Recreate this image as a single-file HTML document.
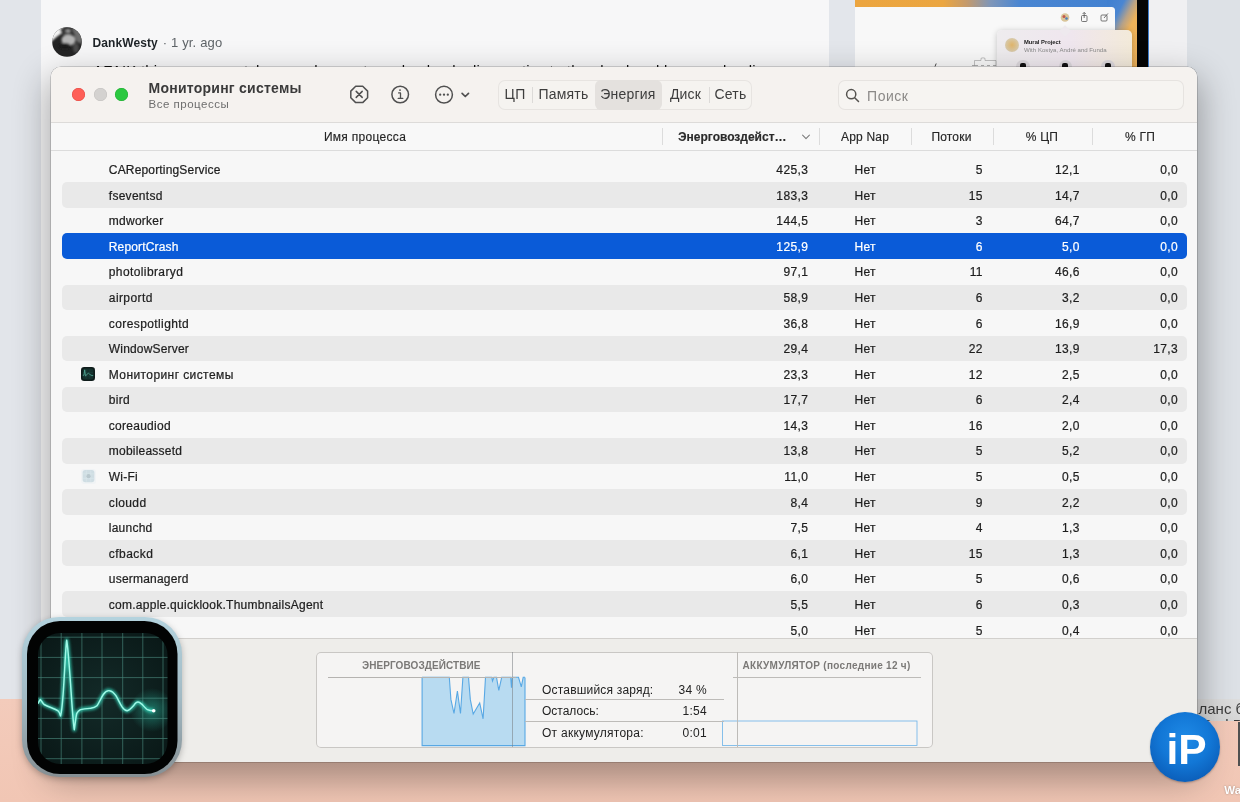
<!DOCTYPE html>
<html lang="ru">
<head>
<meta charset="utf-8">
<title>Мониторинг системы</title>
<style>
html,body{margin:0;padding:0}
body{width:1240px;height:802px;overflow:hidden;position:relative;will-change:transform;background:#f7f7f8;font-family:"Liberation Sans",sans-serif;color:#222}
.abs{position:absolute}
/* ---------- background page ---------- */
#lm{left:0;top:0;width:41px;height:699px;background:#e2e5ea}
#rm{left:1187px;top:0;width:53px;height:699px;background:#dde1e6}
#pink{left:0;top:699px;width:1240px;height:103px;background:linear-gradient(#f3cbbb,#f1c6b4)}
#avatar{left:52px;top:26px;width:30px;height:30px;border-radius:50%;background:radial-gradient(circle at 55% 40%,#bdbdbd 0,#8a8a8a 22%,#3a3a3a 55%,#1d1d1d 100%)}
#uname{left:92.5px;top:35px;font-size:12px;font-weight:700;color:#1f2428;white-space:nowrap;line-height:15px;letter-spacing:.1px}
#uname span{font-weight:400;font-size:13px;color:#5f6468;letter-spacing:.15px;margin-left:1.5px}
#cmt{left:93px;top:61.7px;font-size:15px;color:#111;white-space:nowrap;line-height:18px;letter-spacing:.2px}
#imgwrap{left:829px;top:0;width:358px;height:70px;background:#e3e6eb;overflow:hidden}
#img{left:26px;top:0;width:294px;height:70px;background:linear-gradient(90deg,#eca53f 0%,#eba641 30%,#c49a6c 38%,#7f96b8 46%,#4a86d2 56%,#3f7fd0 100%)}
/* ---------- window ---------- */
#shadow{left:51px;top:67.4px;width:1145.8px;height:695.1px;border-radius:10px;box-shadow:0 14px 34px 4px rgba(0,0,0,.31),0 0 0 .5px rgba(0,0,0,.3)}
#win{left:51px;top:67.4px;width:1145.8px;height:695.1px;border-radius:10px;overflow:hidden;background:#f7f7f7}
#tb{left:0;top:0;width:100%;height:56px;background:#f5f2ef;border-bottom:1px solid #dddbd9;box-sizing:border-box}
.tl{width:13px;height:13px;border-radius:50%;top:21.7px}
#title{left:97.5px;top:13px;font-size:14px;font-weight:700;color:#3a3a3a;letter-spacing:.25px;white-space:nowrap;line-height:17px}
#subtitle{left:97.5px;top:30.5px;font-size:11.5px;color:#6e6e6e;letter-spacing:.5px;white-space:nowrap;line-height:14px}
#tabs{left:446.5px;top:13.6px;width:254px;height:30px;border-radius:7px;background:#f5f3f0;box-shadow:inset 0 0 0 1px #e7e4e1}
#tabs .t{position:absolute;top:0;height:30px;line-height:29.6px;font-size:14px;color:#3d3d3d;text-align:center;letter-spacing:.2px;white-space:nowrap}
#tabsel{left:97px;top:0;width:67.5px;height:30px;border-radius:6px;background:#e4e1de}
.sep{width:1px;background:#dcdad8;top:6.5px;height:16.5px}
#search{left:786.8px;top:13.6px;width:346px;height:30px;border-radius:7px;background:#f6f4f1;box-shadow:inset 0 0 0 1px #e6e3e0}
#search span{position:absolute;left:29.3px;top:2.2px;line-height:29.4px;font-size:14px;letter-spacing:.5px;color:#8b8987}
#hdr{left:0;top:56px;width:100%;height:28.4px;background:#f8f8f8;border-bottom:1px solid #dcdcdc;box-sizing:border-box}
#hdr .h{position:absolute;top:1.5px;line-height:27px;font-size:12px;color:#262626;-webkit-text-stroke:.15px currentColor;white-space:nowrap;text-align:center}
#hdr .vs{position:absolute;top:5px;width:1px;height:17px;background:#dcdcdc}
#table{left:0;top:83.5px;width:100%;height:487.5px;background:#fafafa;overflow:hidden}
.row{position:absolute;left:10.5px;width:1125px;height:25.58px;line-height:25.6px;font-size:12px;color:#1e1e1e;border-radius:5px;white-space:nowrap}
.row.alt{background:#e9e9e9}
.row.sel{background:#0a5bd8;color:#fff}
.row span{position:absolute;top:1.5px;-webkit-text-stroke:.22px currentColor}
.c-name{left:47.3px;letter-spacing:.2px}
.c-en{right:378.5px;letter-spacing:.4px;margin-right:-.4px}
.c-nap{left:793px;letter-spacing:.3px}
.c-th{right:204px;letter-spacing:.4px;margin-right:-.4px}
.c-cpu{right:107px;letter-spacing:.4px;margin-right:-.4px}
.c-gpu{right:8.8px;letter-spacing:.4px;margin-right:-.4px}
.ric{position:absolute;left:19.5px;top:5.8px;width:14px;height:14px}
#pane{left:0;top:571px;width:100%;height:125px;background:#eeedea;border-top:1px solid #d2d0cd;box-sizing:border-box}
#box{left:265px;top:585.5px;width:617px;height:96px;border-radius:5px;background:#f5f4f3;box-shadow:inset 0 0 0 1px #c9c7c4}
.bl{position:absolute;background:#bdbbb8}
.kv{position:absolute;font-size:12px;color:#222;white-space:nowrap;line-height:14px}
.ph{position:absolute;font-size:10px;font-weight:700;color:#7b7977;white-space:nowrap;line-height:12px}
/* ---------- big icon ---------- */
#am{left:22px;top:617px;width:160px;height:160px;filter:drop-shadow(0 2px 3px rgba(0,0,0,.25))}
#ip{left:1150px;top:712px;width:70px;height:70px;border-radius:50%;background:radial-gradient(circle at 50% 38%,#1f8ae6 0,#1277d6 45%,#0b5db8 80%,#084a98 100%);box-shadow:0 1px 2px rgba(0,0,0,.25)}
#ip span{position:absolute;left:16.5px;top:12.6px;font-size:42.5px;font-weight:700;color:#fff;line-height:49px;letter-spacing:0}
</style>
</head>
<body>
<!-- background web page -->
<div class="abs" id="lm"></div>
<div class="abs" id="rm"></div>
<svg class="abs" style="left:52.2px;top:26.8px" width="30" height="30" viewBox="0 0 30 30">
  <defs><clipPath id="avc"><circle cx="15" cy="15" r="14.8"/></clipPath><filter id="avb" x="-30%" y="-30%" width="160%" height="160%"><feGaussianBlur stdDeviation="1"/></filter></defs>
  <g clip-path="url(#avc)">
    <rect width="30" height="30" fill="#242424"/>
    <g filter="url(#avb)">
      <path d="M-3 -3H11L9.500 6.500Q5 9 -2 16Z" fill="#f4f4f4"/>
      <path d="M8 1h12l1 5-6 3-6-3z" fill="#3a3a3a"/>
      <ellipse cx="16.5" cy="13" rx="7" ry="5.5" fill="#b4b4b4"/>
      <path d="M20 1h10v16l-5-2-3-8z" fill="#6d6d6d"/>
      <ellipse cx="13" cy="19" rx="6" ry="3" fill="#1a1a1a"/>
      <ellipse cx="24" cy="21" rx="3" ry="5" fill="#4a4a4a"/>
      <rect x="14" y="2.5" width="4" height="3" fill="#9a9a9a"/>
    </g>
  </g>
</svg>
<div class="abs" id="uname">DankWesty <span>· 1 yr. ago</span></div>
<div class="abs" id="cmt">AFAIK this process catches crash reports and uploads diagnostics to the cloud and keeps reloading</div>
<div class="abs" id="imgwrap">
  <div class="abs" id="img">
    <div class="abs" style="left:252px;top:0;width:30px;height:70px;background:linear-gradient(118deg,#3f7fd0 0%,#4a86d2 26%,#b7a288 42%,#efb35a 56%,#eeb25c 100%)"></div>
    <div class="abs" style="left:0;top:7px;width:259.5px;height:70px;background:#f8f8f8;border-radius:0 3.5px 0 0"></div>
    <div class="abs" style="left:282px;top:0;width:10.8px;height:70px;background:#050505"></div>
    <svg class="abs" style="left:0;top:0" width="294" height="70" viewBox="0 0 294 70">
      <circle cx="210" cy="17.5" r="4.3" fill="#d9c59a"/><circle cx="209" cy="16.5" r="1.5" fill="#c2584a"/><circle cx="211.5" cy="18.5" r="1.3" fill="#4d7fb8"/>
      <g fill="none" stroke="#555" stroke-width=".8"><rect x="226.5" y="15.5" width="5.5" height="6" rx="1"/><path d="M229.2 18V12.6M227.6 14l1.6-1.6 1.6 1.6"/><rect x="246" y="15" width="6" height="6" rx="1"/><path d="M249 18l4-4.6"/></g>
      <path d="M80 66.5l1.2-3" stroke="#333" stroke-width=".9" fill="none"/>
      <path d="M119.5 66v-5.5h6.5v-2.2q2-1 4 0v2.200h11v5.500" stroke="#9a9a9a" stroke-width=".6" fill="none"/><path d="M117 65.500h6M126 65.500h3M132 65.500h3M138 65.500h3" stroke="#999" stroke-width=".8"/>
    </svg>
    <div class="abs" style="left:142px;top:30px;width:135px;height:50px;border-radius:5px;background:linear-gradient(90deg,#eeecee,#efe6ee 55%,#f3ead9);box-shadow:0 1px 6px rgba(0,0,0,.22)">
      <div class="abs" style="left:64px;top:-3.5px;width:8px;height:8px;transform:rotate(45deg);background:#eee9ee"></div>
      <div class="abs" style="left:8px;top:8px;width:14px;height:14px;border-radius:50%;background:radial-gradient(circle,#e0b56a 0,#d9c7a2 60%,#cfcfcf 100%)"></div>
      <div class="abs" style="left:27px;top:8.5px;font-size:5.8px;font-weight:700;color:#222;white-space:nowrap;line-height:7px">Mural Project</div>
      <div class="abs" style="left:27px;top:15.8px;font-size:6.1px;color:#8a8a8a;white-space:nowrap;line-height:7px">With Kostya, André and Funda</div>
      <div class="abs" style="left:19.3px;top:29.5px;width:13.5px;height:13.5px;border-radius:50%;background:#dcd8dc"><div class="abs" style="left:3.7px;top:3.2px;width:6px;height:6px;border-radius:2px;background:#111"></div></div>
      <div class="abs" style="left:61.8px;top:29.5px;width:13.5px;height:13.5px;border-radius:50%;background:#dcd8dc"><div class="abs" style="left:3.7px;top:3.2px;width:6px;height:6px;border-radius:2px;background:#111"></div></div>
      <div class="abs" style="left:104.3px;top:29.5px;width:13.5px;height:13.5px;border-radius:50%;background:#dcd8dc"><div class="abs" style="left:3.7px;top:3.2px;width:6px;height:6px;border-radius:2px;background:#111"></div></div>
    </div>
  </div>
  <div class="abs" style="left:320px;top:0;width:38px;height:70px;background:#f0f0f2"></div>
</div>
<div class="abs" id="pink"></div>
<div class="abs" style="left:1197px;top:699px;width:43px;height:22.4px;background:linear-gradient(#dddddd,#d6d6d6);overflow:hidden">
  <div class="abs" style="left:1.5px;top:-.5px;font-size:15px;color:#3c3c3c;white-space:nowrap;line-height:20px">ланс б</div>
  <div class="abs" style="left:1.5px;top:16px;font-size:15px;color:#3c3c3c;white-space:nowrap;line-height:20px">iPad Pro</div>
</div>
<div class="abs" style="left:1238px;top:721.5px;width:2px;height:44px;background:#505050"></div>
<div class="abs" style="left:1224.3px;top:783.3px;font-size:11.5px;font-weight:700;color:#fff;white-space:nowrap;line-height:14px;text-shadow:0 0 2px rgba(0,0,0,.35)">Wallpaper</div>

<!-- Activity Monitor window -->
<div class="abs" id="shadow"></div>
<div class="abs" id="win">
<div class="abs" id="wi" style="left:0;top:-.9px;width:100%;height:696px">
  <div class="abs" id="tb">
    <div class="abs tl" style="left:21px;background:#fe5f57;box-shadow:inset 0 0 0 .5px #e2463f"></div>
    <div class="abs tl" style="left:42.5px;background:#d4d2d0;box-shadow:inset 0 0 0 .5px #c2c0be"></div>
    <div class="abs tl" style="left:64px;background:#2bc840;box-shadow:inset 0 0 0 .5px #1eab30"></div>
    <div class="abs" id="title">Мониторинг системы</div>
    <div class="abs" id="subtitle">Все процессы</div>
    <svg class="abs" style="left:290px;top:9.4px" width="140" height="36" viewBox="0 0 140 36" fill="none" stroke="#505050" stroke-width="1.5" stroke-linecap="round" stroke-linejoin="round">
      <path d="M14.7 10.2h7l4.9 4.9v6.600l-4.900 4.900h-7l-4.900-4.900v-6.600z"/>
      <path d="M15.200 15.400l6 6M21.200 15.400l-6 6"/>
      <circle cx="59.2" cy="18.500" r="8.300"/>
      <path d="M57.600 16.900h1.900v5.400M57.200 22.400h4.600" stroke-width="1.300"/>
      <circle cx="59" cy="14.100" r=".95" fill="#505050" stroke="none"/>
      <circle cx="103" cy="18.700" r="8.400"/>
      <g fill="#505050" stroke="none"><circle cx="99.200" cy="18.700" r="1.150"/><circle cx="103" cy="18.700" r="1.150"/><circle cx="106.800" cy="18.700" r="1.150"/></g>
      <path d="M121.100 17.300l3.200 3.200 3.200-3.200" stroke-width="1.700"/>
    </svg>
    <div class="abs" id="tabs">
      <div class="abs" id="tabsel"></div>
      <div class="abs sep" style="left:34.5px"></div>
      <div class="abs sep" style="left:211.5px"></div>
      <div class="t" style="left:0;width:35px">ЦП</div>
      <div class="t" style="left:35px;width:62px">Память</div>
      <div class="t" style="left:97px;width:67px">Энергия</div>
      <div class="t" style="left:164px;width:48px">Диск</div>
      <div class="t" style="left:212px;width:42px">Сеть</div>
    </div>
    <div class="abs" id="search">
      <svg class="abs" style="left:7.4px;top:7.7px" width="16" height="16" viewBox="0 0 16 16" fill="none" stroke="#55534f" stroke-width="1.5" stroke-linecap="round"><circle cx="6.2" cy="6.2" r="4.6"/><path d="M9.7 9.7l3.8 3.8"/></svg>
      <span>Поиск</span>
    </div>
  </div>
  <div class="abs" id="hdr">
    <div class="h" style="left:14px;width:600px;letter-spacing:.3px">Имя процесса</div>
    <div class="vs" style="left:610.5px"></div>
    <div class="h" style="left:627px;font-weight:700;text-align:left;color:#2a2a2a">Энерговоздейст…</div>
    <svg class="abs" style="left:750px;top:10.5px" width="10" height="8" viewBox="0 0 10 8" fill="none" stroke="#7c7c7c" stroke-width="1.1" stroke-linecap="round" stroke-linejoin="round"><path d="M1.6 2.2l3.4 3.4 3.4-3.4"/></svg>
    <div class="vs" style="left:767.5px"></div>
    <div class="h" style="left:768px;width:92px;letter-spacing:.2px">App Nap</div>
    <div class="vs" style="left:860px"></div>
    <div class="h" style="left:860px;width:81px;letter-spacing:.2px">Потоки</div>
    <div class="vs" style="left:941.5px"></div>
    <div class="h" style="left:941px;width:100px;letter-spacing:.2px">% ЦП</div>
    <div class="vs" style="left:1041px"></div>
    <div class="h" style="left:1041px;width:96px;letter-spacing:.2px">% ГП</div>
  </div>
  <div class="abs" id="table" style="top:0;height:571px;background:none">
<div class="row" style="top:90.10px"><span class="c-name" style="letter-spacing:0.17px">CAReportingService</span><span class="c-en">425,3</span><span class="c-nap">Нет</span><span class="c-th">5</span><span class="c-cpu">12,1</span><span class="c-gpu">0,0</span></div>
<div class="row alt" style="top:115.68px"><span class="c-name" style="letter-spacing:0.27px">fseventsd</span><span class="c-en">183,3</span><span class="c-nap">Нет</span><span class="c-th">15</span><span class="c-cpu">14,7</span><span class="c-gpu">0,0</span></div>
<div class="row" style="top:141.26px"><span class="c-name" style="letter-spacing:0.26px">mdworker</span><span class="c-en">144,5</span><span class="c-nap">Нет</span><span class="c-th">3</span><span class="c-cpu">64,7</span><span class="c-gpu">0,0</span></div>
<div class="row alt sel" style="top:166.84px"><span class="c-name" style="letter-spacing:0.15px">ReportCrash</span><span class="c-en">125,9</span><span class="c-nap">Нет</span><span class="c-th">6</span><span class="c-cpu">5,0</span><span class="c-gpu">0,0</span></div>
<div class="row" style="top:192.42px"><span class="c-name" style="letter-spacing:0.39px">photolibraryd</span><span class="c-en">97,1</span><span class="c-nap">Нет</span><span class="c-th">11</span><span class="c-cpu">46,6</span><span class="c-gpu">0,0</span></div>
<div class="row alt" style="top:218.00px"><span class="c-name" style="letter-spacing:0.41px">airportd</span><span class="c-en">58,9</span><span class="c-nap">Нет</span><span class="c-th">6</span><span class="c-cpu">3,2</span><span class="c-gpu">0,0</span></div>
<div class="row" style="top:243.58px"><span class="c-name" style="letter-spacing:0.4px">corespotlightd</span><span class="c-en">36,8</span><span class="c-nap">Нет</span><span class="c-th">6</span><span class="c-cpu">16,9</span><span class="c-gpu">0,0</span></div>
<div class="row alt" style="top:269.16px"><span class="c-name" style="letter-spacing:0.18px">WindowServer</span><span class="c-en">29,4</span><span class="c-nap">Нет</span><span class="c-th">22</span><span class="c-cpu">13,9</span><span class="c-gpu">17,3</span></div>
<div class="row" style="top:294.74px"><svg class="ric" viewBox="0 0 14 14"><rect x="0" y="0" width="14" height="14" rx="3.2" fill="#0f1c1b"/><rect x="1.6" y="1.6" width="10.8" height="10.8" rx="2" fill="#14302c"/><path d="M5.2 2.4v9.4M8.8 2.4v9.4M2 5.4h10M2 9h10" stroke="#1d4540" stroke-width=".5"/><polyline points="1.8,8.3 3,8.2 3.7,2.8 4.5,8.9 5.3,8.4 6.5,6.7 7.6,6.3 8.8,7.4 10,8.1 11,8.6 12.2,8.4" fill="none" stroke="#56b09d" stroke-width=".85" opacity=".9"/></svg><span class="c-name" style="letter-spacing:0.41px">Мониторинг системы</span><span class="c-en">23,3</span><span class="c-nap">Нет</span><span class="c-th">12</span><span class="c-cpu">2,5</span><span class="c-gpu">0,0</span></div>
<div class="row alt" style="top:320.32px"><span class="c-name" style="letter-spacing:0.25px">bird</span><span class="c-en">17,7</span><span class="c-nap">Нет</span><span class="c-th">6</span><span class="c-cpu">2,4</span><span class="c-gpu">0,0</span></div>
<div class="row" style="top:345.90px"><span class="c-name" style="letter-spacing:0.27px">coreaudiod</span><span class="c-en">14,3</span><span class="c-nap">Нет</span><span class="c-th">16</span><span class="c-cpu">2,0</span><span class="c-gpu">0,0</span></div>
<div class="row alt" style="top:371.48px"><span class="c-name" style="letter-spacing:0.22px">mobileassetd</span><span class="c-en">13,8</span><span class="c-nap">Нет</span><span class="c-th">5</span><span class="c-cpu">5,2</span><span class="c-gpu">0,0</span></div>
<div class="row" style="top:397.06px"><svg class="ric" style="left:19.2px;top:5.3px;width:15.1px;height:15.1px" viewBox="0 0 15 15"><rect x="0" y="0" width="15" height="15" rx="3.2" fill="#f0f3f5"/><rect x="1.6" y="1.1" width="11.7" height="12" rx="2.6" fill="#cfdde3"/><path d="M5.3 1.5v11.2M9.7 1.5v11.2M2 4.9h11M2 9.3h11" stroke="#d9e5ea" stroke-width=".7"/><circle cx="7.5" cy="7.1" r="2.1" fill="#b9c8ce"/></svg><span class="c-name" style="letter-spacing:0.25px">Wi-Fi</span><span class="c-en">11,0</span><span class="c-nap">Нет</span><span class="c-th">5</span><span class="c-cpu">0,5</span><span class="c-gpu">0,0</span></div>
<div class="row alt" style="top:422.64px"><span class="c-name" style="letter-spacing:0.39px">cloudd</span><span class="c-en">8,4</span><span class="c-nap">Нет</span><span class="c-th">9</span><span class="c-cpu">2,2</span><span class="c-gpu">0,0</span></div>
<div class="row" style="top:448.22px"><span class="c-name" style="letter-spacing:0.24px">launchd</span><span class="c-en">7,5</span><span class="c-nap">Нет</span><span class="c-th">4</span><span class="c-cpu">1,3</span><span class="c-gpu">0,0</span></div>
<div class="row alt" style="top:473.80px"><span class="c-name" style="letter-spacing:0.45px">cfbackd</span><span class="c-en">6,1</span><span class="c-nap">Нет</span><span class="c-th">15</span><span class="c-cpu">1,3</span><span class="c-gpu">0,0</span></div>
<div class="row" style="top:499.38px"><span class="c-name" style="letter-spacing:0.21px">usermanagerd</span><span class="c-en">6,0</span><span class="c-nap">Нет</span><span class="c-th">5</span><span class="c-cpu">0,6</span><span class="c-gpu">0,0</span></div>
<div class="row alt" style="top:524.96px"><span class="c-name" style="letter-spacing:0.26px">com.apple.quicklook.ThumbnailsAgent</span><span class="c-en">5,5</span><span class="c-nap">Нет</span><span class="c-th">6</span><span class="c-cpu">0,3</span><span class="c-gpu">0,0</span></div>
<div class="row" style="top:550.54px"><span class="c-name"></span><span class="c-en">5,0</span><span class="c-nap">Нет</span><span class="c-th">5</span><span class="c-cpu">0,4</span><span class="c-gpu">0,0</span></div>
  </div>
  <div class="abs" id="pane"></div>
  <div class="abs" id="box">
    <svg class="abs" style="left:0;top:0" width="617" height="95" viewBox="0 0 617 95">
      <path d="M106.1,93.6 L106.1,25.3 L133.3,25.3 L134.9,47.4 L138.0,61.5 L141.4,39.0 L144.5,61.5 L146.9,25.3 L152.5,25.3 L154.3,47.4 L157.2,62.0 L163.7,51.0 L167.1,66.8 L169.5,25.3 L175.8,25.3 L176.5,29.0 L177.9,25.3 L180.5,25.3 L182.8,38.4 L185.7,25.3 L194.7,25.3 L195.5,35.8 L196.2,25.3 L202.5,25.3 L205.3,34.8 L207.2,25.3 L209.0,25.3 L209.0,93.6 Z" fill="#b8dbf1"/>
      <polyline points="106.1,25.3 133.3,25.3 134.9,47.4 138.0,61.5 141.4,39.0 144.5,61.5 146.9,25.3 152.5,25.3 154.3,47.4 157.2,62.0 163.7,51.0 167.1,66.8 169.5,25.3 175.8,25.3 176.5,29.0 177.9,25.3 180.5,25.3 182.8,38.4 185.7,25.3 194.7,25.3 195.5,35.8 196.2,25.3 202.5,25.3 205.3,34.8 207.2,25.3 209.0,25.3" fill="none" stroke="#58a8e4" stroke-width="1.1" stroke-linejoin="miter"/>
      <path d="M106.1 25.5V93.6H209V25.5" fill="none" stroke="#58a8e4" stroke-width="1.1"/>
      <rect x="406.5" y="69" width="194.5" height="24.5" fill="none" stroke="#6ab2e8" stroke-width=".8"/>
    </svg>
    <div class="bl" style="left:195.5px;top:0;width:1px;height:95px;background:rgba(120,125,130,.55)"></div>
    <div class="bl" style="left:420.5px;top:0;width:1px;height:95px"></div>
    <div class="bl" style="left:12px;top:24.5px;width:188px;height:1px;background:#b5b3b0"></div>
    <div class="bl" style="left:417px;top:24.5px;width:188px;height:1px"></div>
    <div class="bl" style="left:209px;top:47px;width:199px;height:1px"></div>
    <div class="bl" style="left:209px;top:69px;width:199px;height:1px"></div>
    <div class="ph" style="left:46px;top:7.5px;letter-spacing:.08px">ЭНЕРГОВОЗДЕЙСТВИЕ</div>
    <div class="ph" style="left:426.5px;top:7.5px;letter-spacing:.29px">АККУМУЛЯТОР (последние 12 ч)</div>
    <div class="kv" style="left:226px;top:30.5px;letter-spacing:.19px">Оставшийся заряд:</div>
    <div class="kv" style="right:226px;top:30.5px;letter-spacing:.3px">34 %</div>
    <div class="kv" style="left:226px;top:52px;letter-spacing:0">Осталось:</div>
    <div class="kv" style="right:226px;top:52px;letter-spacing:.3px">1:54</div>
    <div class="kv" style="left:226px;top:74px;letter-spacing:.26px">От аккумулятора:</div>
    <div class="kv" style="right:226px;top:74px;letter-spacing:.3px">0:01</div>
  </div>
</div>
</div>

<!-- big Activity Monitor icon -->
<svg class="abs" id="am" width="160" height="160" viewBox="0 0 160 160">
  <defs>
    <linearGradient id="rim" x1="0" y1="0" x2="0" y2="1"><stop offset="0" stop-color="#b4d3de"/><stop offset=".5" stop-color="#a2bac4"/><stop offset="1" stop-color="#868f93"/></linearGradient>
    <radialGradient id="scr" cx=".5" cy=".5" r=".7"><stop offset="0" stop-color="#132a28"/><stop offset="1" stop-color="#091716"/></radialGradient>
    <radialGradient id="glow" cx=".5" cy=".5" r=".5"><stop offset="0" stop-color="#2fd6b8" stop-opacity=".45"/><stop offset="1" stop-color="#2fd6b8" stop-opacity="0"/></radialGradient>
    <filter id="bl" x="-20%" y="-20%" width="140%" height="140%"><feGaussianBlur stdDeviation="1.6"/></filter>
    <clipPath id="sc"><rect x="16" y="16" width="129.5" height="131" rx="22"/></clipPath>
  </defs>
  <rect x="0" y="0" width="160" height="160" rx="37" fill="url(#rim)"/>
  <rect x="5" y="4" width="150.5" height="153" rx="33" fill="#020303"/>
  <rect x="16" y="16" width="129.5" height="131" rx="22" fill="url(#scr)"/>
  <g clip-path="url(#sc)">
    <circle cx="130" cy="93" r="22" fill="url(#glow)"/>
    <g stroke="#5aa596" stroke-width=".7" opacity=".72">
      <path d="M39.2 16v131M59.9 16v131M80 16v131M100.7 16v131M120.8 16v131M141 16v131M19 16v131"/>
      <path d="M16 20.2h130M16 40.4h130M16 60.6h130M16 81.2h130M16 101.4h130M16 121.5h130M16 141.7h130"/>
    </g>
    <path d="M16 86.3 L18.3 82.5 C20 84.5 21 86.5 22.1 87.5 C27 90 33 92 36 93.8 C37.5 95 38 97 38.5 98.9 C39.5 96 40.3 88 41 78.7 C42.5 60 43.5 30 44.7 23.3 C46 30 47.3 50 48.5 66.1 C49.8 85 51 105 52.3 112.7 C53 108 53.8 100 54.8 96.3 C56 94 57 93.5 58.6 92.6 C62 91.8 65 91.6 68.7 91.3 C71 91 73 90.5 75 88.8 C77 86 79 81 81.3 77.5 C83.5 74.2 85.5 73.3 87.6 73.7 C90 74 92 76 93.9 78.7 C96 82 98 87 100.2 90.1 C102 92.6 104 93.8 105.2 93.8 C107 93.5 109.5 91 111.5 88.8 C113 86.5 114.5 85 116 85 C117.5 85 119 86.5 120.3 87.6 C122 89.5 124 92 125.4 92.6 C127.5 93.6 129.5 93.8 131.7 93.8" fill="none" stroke="#35d9bd" stroke-width="4" stroke-linejoin="round" filter="url(#bl)" opacity=".8"/>
    <path d="M16 86.3 L18.3 82.5 C20 84.5 21 86.5 22.1 87.5 C27 90 33 92 36 93.8 C37.5 95 38 97 38.5 98.9 C39.5 96 40.3 88 41 78.7 C42.5 60 43.5 30 44.7 23.3 C46 30 47.3 50 48.5 66.1 C49.8 85 51 105 52.3 112.7 C53 108 53.8 100 54.8 96.3 C56 94 57 93.5 58.6 92.6 C62 91.8 65 91.6 68.7 91.3 C71 91 73 90.5 75 88.8 C77 86 79 81 81.3 77.5 C83.5 74.2 85.5 73.3 87.6 73.7 C90 74 92 76 93.9 78.7 C96 82 98 87 100.2 90.1 C102 92.6 104 93.8 105.2 93.8 C107 93.5 109.5 91 111.5 88.8 C113 86.5 114.5 85 116 85 C117.5 85 119 86.5 120.3 87.6 C122 89.5 124 92 125.4 92.6 C127.5 93.6 129.5 93.8 131.7 93.8" fill="none" stroke="#9ff8e6" stroke-width="1.45" stroke-linejoin="round" stroke-linecap="round"/>
    <circle cx="131.7" cy="93.8" r="1.8" fill="#fff"/>
  </g>
</svg>

<!-- site badge -->
<div class="abs" id="ip"><span>iP</span></div>
</body>
</html>
